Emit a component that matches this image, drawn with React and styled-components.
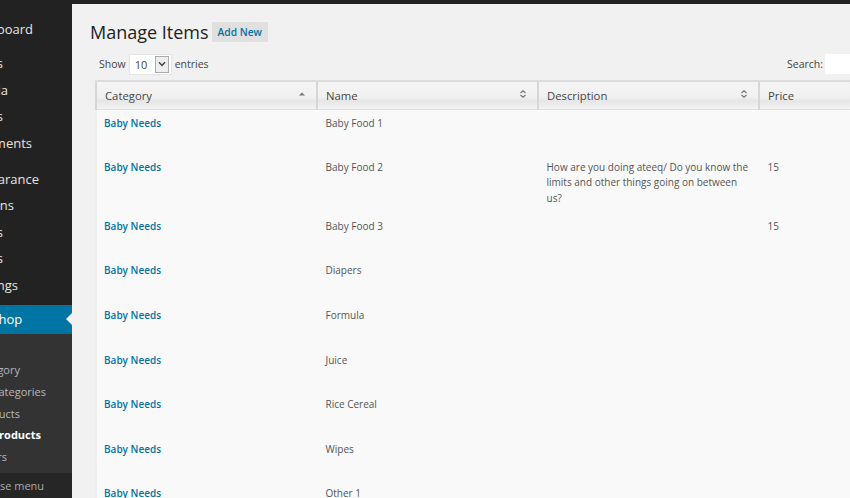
import styled, { createGlobalStyle } from "styled-components";

const GlobalStyle = createGlobalStyle`
  html, body {
    margin: 0;
    padding: 0;
    height: 100%;
    overflow: hidden;
    background: #f1f1f1;
    font-family: "Open Sans", sans-serif;
  }
`;

// end = where the label stops, the sidebar is scrolled off to the left
const topMenu = [
  { label: "Dashboard", end: 33, gap: 12 },
  { label: "Posts", end: 3, gap: 7.5 },
  { label: "Media", end: 8 },
  { label: "Pages", end: 3 },
  { label: "Comments", end: 32 },
  { label: "Appearance", end: 39, gap: 9.5 },
  { label: "Plugins", end: 14 },
  { label: "Users", end: 3 },
  { label: "Tools", end: 3 },
  { label: "Settings", end: 18 },
];

const subMenu = [
  { label: "Add Category", end: 20 },
  { label: "All Categories", end: 46 },
  { label: "Add Products", end: 20 },
  { label: "All Products", end: 41, current: true },
  { label: "Orders", end: 7 },
];

const rows = [
  { name: "Baby Food 1" },
  {
    name: "Baby Food 2",
    description: "How are you doing ateeq/ Do you know the limits and other things going on between us?",
    price: "15",
  },
  { name: "Baby Food 3", price: "15" },
  { name: "Diapers" },
  { name: "Formula" },
  { name: "Juice" },
  { name: "Rice Cereal" },
  { name: "Wipes" },
  { name: "Other 1" },
];

function SortIcon({ only }) {
  if (only) {
    return (
      <SortSvg viewBox="0 0 8 8">
        <path d="M1 5.5 4 2.5 7 5.5Z" fill="#777" />
      </SortSvg>
    );
  }
  return (
    <SortSvg viewBox="0 0 8 8">
      <path d="M1.5 3 4 .8 6.5 3M1.5 5 4 7.2 6.5 5" fill="none" stroke="#777" strokeWidth="1.2" />
    </SortSvg>
  );
}

export default function App() {
  return (
    <Page>
      <GlobalStyle />
      <TopBar />
      <Body>
        <Sidebar>
          <Menu>
            {topMenu.map((item) => (
              <MenuItem key={item.label} $end={item.end} $gap={item.gap}>{item.label}</MenuItem>
            ))}
          </Menu>
          <ActiveItem>Eshop</ActiveItem>
          <SubMenu>
            {subMenu.map((item) => (
              <SubItem key={item.label} $end={item.end} $current={item.current}>{item.label}</SubItem>
            ))}
          </SubMenu>
          <Collapse>Collapse menu</Collapse>
        </Sidebar>
        <Content>
          <TitleRow>
            <Title>Manage Items</Title>
            <AddNew>Add New</AddNew>
          </TitleRow>
          <Controls>
            <Length>
              Show
              <FakeSelect>
                10
                <SelectArrow>
                  <svg width="8" height="6" viewBox="0 0 8 6">
                    <path d="M1 1.2 4 4.4 7 1.2" fill="none" stroke="#444" strokeWidth="1.5" />
                  </svg>
                </SelectArrow>
              </FakeSelect>
              entries
            </Length>
            <SearchBox>
              Search:
              <SearchInput />
            </SearchBox>
          </Controls>
          <Table>
            <thead>
              <tr>
                <Th>Category<SortIcon only /></Th>
                <Th>Name<SortIcon /></Th>
                <Th>Description<SortIcon /></Th>
                <Th>Price</Th>
              </tr>
            </thead>
            <tbody>
              {rows.map((row) => (
                <Row key={row.name}>
                  <Td><CategoryLink>Baby Needs</CategoryLink></Td>
                  <Td>{row.name}</Td>
                  <Td>{row.description}</Td>
                  <Td>{row.price}</Td>
                </Row>
              ))}
            </tbody>
          </Table>
        </Content>
      </Body>
    </Page>
  );
}

const Page = styled.div`
  width: 850px;
  height: 498px;
  overflow: hidden;
  display: flex;
  flex-direction: column;
`;

const TopBar = styled.div`
  height: 4px;
  flex: none;
  background: #222;
`;

const Body = styled.div`
  flex: 1;
  display: flex;
  min-height: 0;
`;

const Sidebar = styled.nav`
  width: 72px;
  flex: none;
  overflow: hidden;
  background: #222;
  display: flex;
  flex-direction: column;
  color: #eee;
  font-size: 13px;
`;

const Menu = styled.div`
  padding-bottom: 7px;
`;

const MenuItem = styled.div`
  display: flex;
  justify-content: flex-end;
  width: ${(p) => p.$end}px;
  height: 26.5px;
  line-height: 26px;
  margin-top: ${(p) => p.$gap || 0}px;
  white-space: nowrap;
  color: #e4e4e4;
`;

const ActiveItem = styled.div`
  position: relative;
  height: 29px;
  line-height: 29px;
  flex: none;
  text-indent: -15px;
  background: #0074a2;
  color: #fff;
  white-space: nowrap;

  &::after {
    content: "";
    position: absolute;
    right: 0;
    top: 8px;
    border: 6px solid transparent;
    border-left: 0;
    border-right: 6px solid #f1f1f1;
  }
`;

const SubMenu = styled.div`
  flex: 1;
  background: #333;
  padding-top: 25px;
  font-size: 11px;
`;

const SubItem = styled.div`
  display: flex;
  justify-content: flex-end;
  width: ${(p) => p.$end}px;
  height: 21.8px;
  line-height: 21px;
  white-space: nowrap;
  color: ${(p) => (p.$current ? "#fff" : "#b4b9be")};
  font-weight: ${(p) => (p.$current ? 700 : 400)};
`;

const Collapse = styled.div`
  flex: none;
  height: 21px;
  padding-top: 4px;
  line-height: 18px;
  text-indent: -32px;
  background: #262626;
  color: #aaa;
  font-size: 11px;
  white-space: nowrap;
`;

const Content = styled.main`
  flex: 1;
  min-width: 0;
  padding: 16px 0 0 18px;
  background: #f1f1f1;
`;

const TitleRow = styled.div`
  display: flex;
  align-items: center;
  gap: 3px;
  height: 24px;
`;

const Title = styled.h1`
  margin: 0;
  font-size: 18px;
  font-weight: 400;
  line-height: 24px;
  color: #222;
  white-space: nowrap;
`;

const AddNew = styled.span`
  padding: 0 6px;
  height: 20px;
  line-height: 20px;
  background: #e0e0e0;
  color: #0074a2;
  font-size: 10.2px;
  font-weight: 600;
  white-space: nowrap;
`;

const Controls = styled.div`
  display: flex;
  justify-content: space-between;
  align-items: center;
  width: 751px;
  height: 20px;
  margin: 10px 0 6px 9px;
  color: #444;
  font-size: 10.5px;
`;

const Length = styled.div`
  display: flex;
  align-items: center;
  gap: 3px;
`;

const FakeSelect = styled.div`
  display: flex;
  align-items: center;
  justify-content: space-between;
  box-sizing: border-box;
  width: 43px;
  height: 21px;
  padding: 0 2px 0 5px;
  background: #fff;
  border: 1px solid #e4e4e4;
  font-size: 11px;
`;

const SelectArrow = styled.span`
  display: flex;
  align-items: center;
  justify-content: center;
  box-sizing: border-box;
  width: 14px;
  height: 17px;
  background: #eee;
  border: 1px solid #aaa;
`;

const SearchBox = styled.div`
  display: flex;
  align-items: center;
  gap: 2px;
  white-space: nowrap;
`;

const SearchInput = styled.div`
  width: 25px;
  height: 20px;
  background: #fff;
`;

const Table = styled.table`
  width: 884px;
  margin-left: 5px;
  table-layout: fixed;
  border-collapse: collapse;
  background: #f9f9f9;
  font-size: 10px;
  color: #555;
`;

const Th = styled.th`
  position: relative;
  box-sizing: border-box;
  width: 221px;
  height: 28px;
  padding: 0 8px;
  text-align: left;
  font-size: 11.3px;
  font-weight: 400;
  color: #444;
  border-top: 2px solid #dcdcdc;
  border-bottom: 1px solid #dfdfdf;
  border-left: 2px solid #d6d6d6;
  background: linear-gradient(#f4f4f4, #f1f1f1 55%, #e6e6e6 70%, #f2f2f2);
  white-space: nowrap;
`;

const SortSvg = styled.svg`
  position: absolute;
  right: 10px;
  top: 8px;
  width: 8px;
  height: 8px;
`;

const Row = styled.tr`
  height: 44.6px;
`;

const Td = styled.td`
  padding: 6px 8.5px 6.5px;
  vertical-align: top;
  line-height: 15.6px;
  &:first-child {
    border-left: 2px solid #eee;
    padding-left: 7px;
  }
`;

const CategoryLink = styled.a`
  color: #0074a2;
  font-weight: 600;
`;
